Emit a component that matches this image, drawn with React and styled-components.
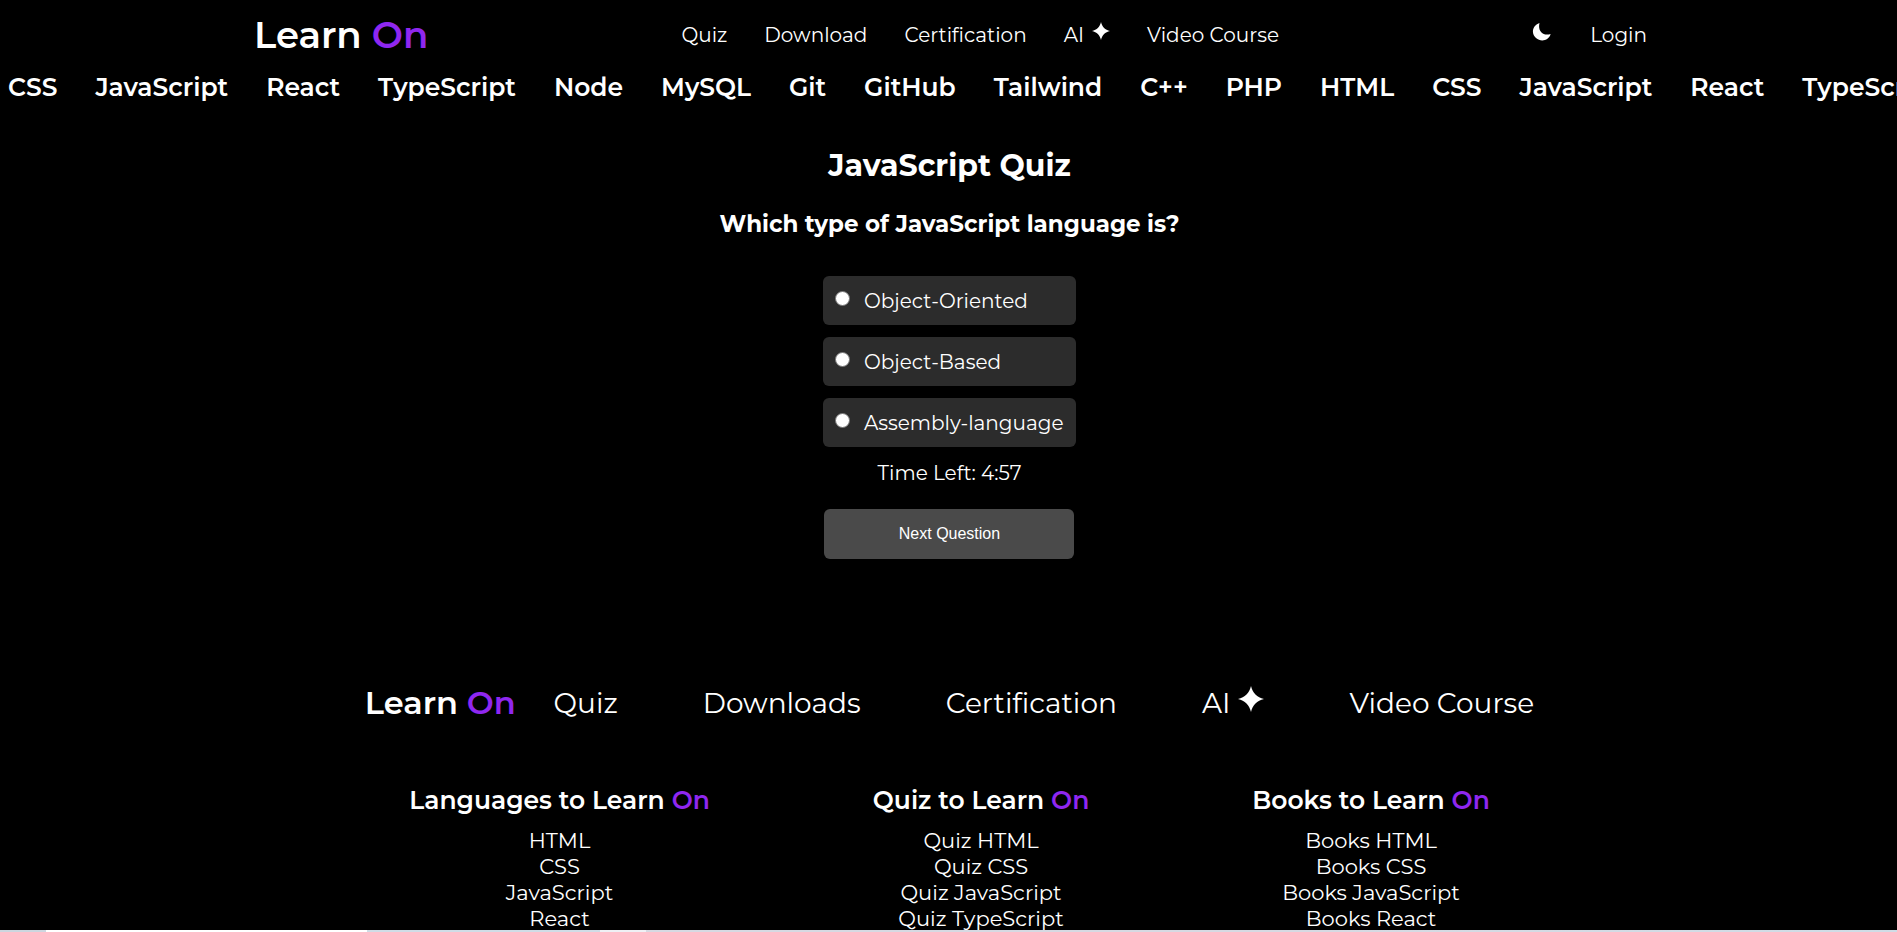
import React from "react";
import styled, { createGlobalStyle } from "styled-components";

const Global = createGlobalStyle`
  * { box-sizing: border-box; margin: 0; padding: 0; }
  html, body { height: 100%; overflow: hidden; background: #000; }
  body { font-family: Montserrat, Inter, sans-serif; color: #fff; }
  #root { height: 100%; }
  a { color: inherit; text-decoration: none; }
  ul { list-style: none; }
`;

const Page = styled.div`
  height: 100%;
  display: flex;
  flex-direction: column;
  overflow: hidden;
`;

const Header = styled.header`
  flex: none;
  height: 70px;
  padding: 0 250px 0 254px;
  display: flex;
  align-items: center;
  justify-content: space-between;
`;

const Logo = styled.a`
  font-size: ${(p) => p.$size}px;
  line-height: 40px;
  font-weight: 600;
  white-space: nowrap;
`;

const Accent = styled.span`
  color: #8f27f0;
`;

const NavList = styled.ul`
  display: flex;
  gap: ${(p) => p.$gap}px;
  font-size: ${(p) => p.$size}px;
  line-height: 36px;
  white-space: nowrap;
`;

const NavLink = styled.a`
  display: flex;
  align-items: center;
  gap: 8px;
`;

const Star = styled.svg`
  width: ${(p) => p.$size}px;
  height: ${(p) => p.$size}px;
  fill: #fff;
  margin-bottom: 8px;
`;

const Actions = styled.div`
  display: flex;
  align-items: center;
  gap: 38px;
  font-size: 20px;
  line-height: 36px;
`;

const ThemeButton = styled.button`
  border: 0;
  background: none;
  width: 20px;
  height: 24px;
  color: #fff;
  svg { display: block; fill: #fff; }
`;

const Ticker = styled.ul`
  flex: none;
  display: flex;
  gap: 38px;
  padding-left: 8px;
  font-size: 25px;
  font-weight: 600;
  line-height: 34px;
  white-space: nowrap;
`;

const Quiz = styled.main`
  flex: none;
  display: flex;
  flex-direction: column;
  align-items: center;
  padding: 42px 0 0 2px;
`;

const Title = styled.h1`
  font-size: 30px;
  line-height: 40px;
  font-weight: 700;
`;

const QuizForm = styled.form`
  display: flex;
  flex-direction: column;
  align-items: center;
`;

const Question = styled.h2`
  margin: 22px 0 36px;
  font-size: 23px;
  line-height: 32px;
  font-weight: 700;
`;

const Options = styled.div`
  display: flex;
  flex-direction: column;
  gap: 12px;
`;

const Option = styled.label`
  display: flex;
  align-items: center;
  gap: 14px;
  width: 253px;
  height: 49px;
  padding: 0 12px;
  border-radius: 6px;
  background: #2c2c2c;
  font-size: 20px;
  white-space: nowrap;
`;

const Radio = styled.input`
  appearance: none;
  width: 15px;
  height: 15px;
  margin-bottom: 4px;
  border: 1px solid #767676;
  border-radius: 50%;
  background: #fff;
  &:checked { border: 4px solid #8f27f0; }
`;

const Timer = styled.p`
  margin: 14px 0 24px;
  font-size: 20px;
  line-height: 24px;
`;

const NextButton = styled.button`
  width: 250px;
  height: 50px;
  border: 0;
  border-radius: 6px;
  background: #4a4a4a;
  color: #fff;
  font: 16px "Liberation Sans", Arial, sans-serif;
`;

const Footer = styled.footer`
  flex: none;
  margin-top: 124px;
  padding-left: 2px;
`;

const FooterTop = styled.div`
  display: flex;
  align-items: center;
  justify-content: center;
  gap: 38px;
`;

const Columns = styled.div`
  display: flex;
  justify-content: center;
  gap: 163px;
  margin-top: 61px;
`;

const Column = styled.section`
  text-align: center;
  line-height: 26px;
  font-size: 21px;
`;

const ColumnTitle = styled.h3`
  margin-bottom: 12px;
  font-size: 25px;
  line-height: 32px;
  font-weight: 600;
`;

const Strip = styled.div`
  position: fixed;
  left: 0;
  right: 0;
  bottom: 0;
  height: 2px;
  background: linear-gradient(90deg, #ccd6df 46px, #fff 46px 367px, #cfdce6 367px 600px, #eef0f4 600px 646px, #d6d9e2 646px 70%, #cfdce6);
`;

const topics = ["CSS", "JavaScript", "React", "TypeScript", "Node", "MySQL", "Git", "GitHub", "Tailwind", "C++", "PHP", "HTML", "CSS", "JavaScript", "React", "TypeScript"];
const answers = ["Object-Oriented", "Object-Based", "Assembly-language"];
const columns = [
  { name: "Languages", items: ["HTML", "CSS", "JavaScript", "React"] },
  { name: "Quiz", items: ["Quiz HTML", "Quiz CSS", "Quiz JavaScript", "Quiz TypeScript"] },
  { name: "Books", items: ["Books HTML", "Books CSS", "Books JavaScript", "Books React"] },
];

const Brand = ({ size }) => (
  <Logo href="#" $size={size}>Learn <Accent>On</Accent></Logo>
);

const Nav = ({ download, size, gap, star }) => (
  <nav>
    <NavList $size={size} $gap={gap}>
      <li><NavLink href="#quiz">Quiz</NavLink></li>
      <li><NavLink href="#download">{download}</NavLink></li>
      <li><NavLink href="#certification">Certification</NavLink></li>
      <li>
        <NavLink href="#ai">
          AI
          <Star $size={star} viewBox="0 0 24 24" aria-hidden="true">
            <path d="M12 0C13.500 6.500 17.500 10.500 24 12C17.500 13.500 13.500 17.500 12 24C10.500 17.500 6.500 13.500 0 12C6.500 10.500 10.500 6.500 12 0Z" />
          </Star>
        </NavLink>
      </li>
      <li><NavLink href="#video">Video Course</NavLink></li>
    </NavList>
  </nav>
);

export default function App() {
  return (
    <Page>
      <Global />
      <Header>
        <Brand size={37} />
        <Nav download="Download" size={20} gap={37} star={18} />
        <Actions>
          <ThemeButton aria-label="Toggle theme">
            <svg width="20" height="24" viewBox="-1 0 20 24">
              <path d="M6.500 0C-1 2.500 -2 11 3 15C8 19.500 16 17.500 17.600 11C10 13.500 4.500 8 6.500 0Z" />
            </svg>
          </ThemeButton>
          <a href="#login">Login</a>
        </Actions>
      </Header>
      <Ticker>
        {topics.map((t, i) => <li key={i}>{t}</li>)}
      </Ticker>
      <Quiz>
        <Title>JavaScript Quiz</Title>
        <QuizForm onSubmit={(e) => e.preventDefault()}>
          <Question id="question">Which type of JavaScript language is?</Question>
          <Options role="radiogroup" aria-labelledby="question">
            {answers.map((a) => (
              <Option key={a}>
                <Radio type="radio" name="answer" value={a} />
                {a}
              </Option>
            ))}
          </Options>
          <Timer>Time Left: 4:57</Timer>
          <NextButton type="submit">Next Question</NextButton>
        </QuizForm>
      </Quiz>
      <Footer>
        <FooterTop>
          <Brand size={32} />
          <Nav download="Downloads" size={28} gap={85} star={26} />
        </FooterTop>
        <Columns>
          {columns.map((c) => (
            <Column key={c.name}>
              <ColumnTitle>{c.name} to Learn <Accent>On</Accent></ColumnTitle>
              <ul>
                {c.items.map((t) => <li key={t}><a href="#topic">{t}</a></li>)}
              </ul>
            </Column>
          ))}
        </Columns>
      </Footer>
      <Strip />
    </Page>
  );
}
